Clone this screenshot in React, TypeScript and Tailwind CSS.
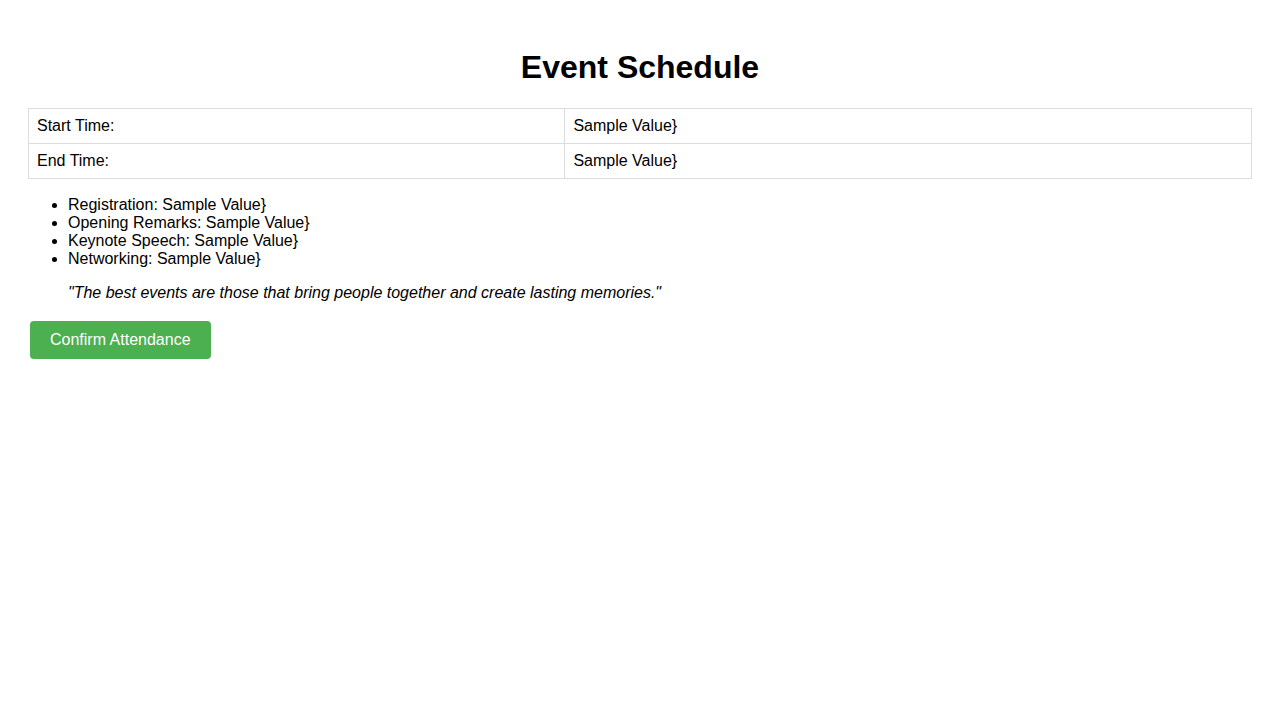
export default function App() {
  const items = [
    "Registration: Sample Value}",
    "Opening Remarks: Sample Value}",
    "Keynote Speech: Sample Value}",
    "Networking: Sample Value}",
  ];
  const val = "Sample Value}";
  return (
    <div className="bg-white min-h-[720px] p-[8px] text-black text-[16px] leading-[normal]" style={{ fontFamily: '"Liberation Sans", Arial, sans-serif' }}>
      <div className="p-[20px]">
        <h1 className="text-[32px] font-bold text-center my-[21.44px] leading-[normal]">Event Schedule</h1>
        <table className="w-full border-collapse">
          <tbody>
            <tr>
              <td className="border border-[#dddddd] p-[8px] text-left">Start Time:</td>
              <td className="border border-[#dddddd] p-[8px] text-left">{val}</td>
            </tr>
            <tr>
              <td className="border border-[#dddddd] p-[8px] text-left">End Time:</td>
              <td className="border border-[#dddddd] p-[8px] text-left">{val}</td>
            </tr>
          </tbody>
        </table>
        <ul className="list-disc pl-[40px] mt-[17px] mb-[16px]">
          {items.map((t) => (
            <li key={t}>{t}</li>
          ))}
        </ul>
        <blockquote className="italic mx-[40px] my-[16px]">
          "The best events are those that bring people together and create lasting memories."
        </blockquote>
        <button className="mx-[2px] mt-[3px] mb-[2px] bg-[#4CAF50] text-white px-[20px] py-[10px] rounded-[4px] text-[16px] leading-[normal] cursor-pointer">
          Confirm Attendance
        </button>
      </div>
    </div>
  );
}
